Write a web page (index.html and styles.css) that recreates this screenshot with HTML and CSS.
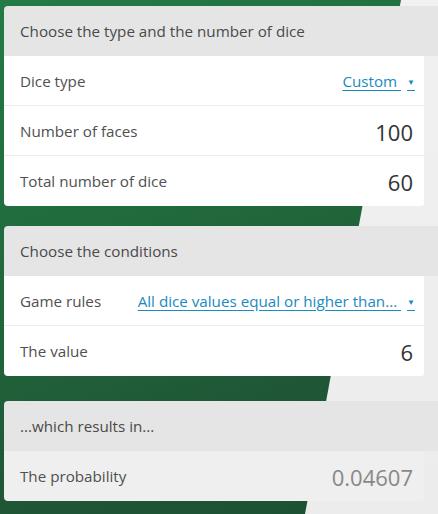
FILE: index.html
```html
<!DOCTYPE html>
<html>
<head>
<meta charset="utf-8">
<link rel="stylesheet" href="styles.css">
</head>
<body>
<div class="bg"></div>
<main class="page">
  <section class="card card-first">
    <div class="card-head">Choose the type and the number of dice</div>
    <div class="rows">
      <div class="row"><span class="label">Dice type</span><a class="select">Custom <span class="caret">▼</span></a></div>
      <div class="row"><span class="label">Number of faces</span><span class="value">100</span></div>
      <div class="row"><span class="label">Total number of dice</span><span class="value">60</span></div>
    </div>
  </section>
  <section class="card card-second">
    <div class="card-head">Choose the conditions</div>
    <div class="rows">
      <div class="row"><span class="label">Game rules</span><a class="select">All dice values equal or higher than... <span class="caret">▼</span></a></div>
      <div class="row"><span class="label">The value</span><span class="value">6</span></div>
    </div>
  </section>
  <section class="card card-third">
    <div class="card-head">...which results in...</div>
    <div class="rows result">
      <div class="row"><span class="label">The probability</span><span class="value muted">0.04607</span></div>
    </div>
  </section>
</main>
</body>
</html>
```

FILE: styles.css
```css
html, body {
  margin: 0;
  padding: 0;
  width: 438px;
  height: 514px;
  overflow: hidden;
}
body {
  position: relative;
  font-family: "Open Sans", "Noto Sans", sans-serif;
  background: linear-gradient(160deg, #237b45 0%, #216a3c 40%, #1f5636 75%, #1d4f33 100%);
}
.bg {
  position: absolute;
  inset: 0;
  background: linear-gradient(180deg, #f1f1f1 0%, #ececec 100%);
  clip-path: polygon(401px 0, 438px 0, 438px 514px, 305px 514px);
}
.page {
  position: relative;
  padding: 6px 0 0 4px;
}
.card {
  width: 450px;
  border-radius: 4px 0 0 4px;
  overflow: hidden;
}
.card-second { margin-top: 20px; }
.card-third { margin-top: 25px; }
.card-head {
  height: 50px;
  display: flex;
  align-items: center;
  padding-left: 16px;
  background: #e5e5e5;
  color: #4a4a4a;
  font-size: 15.2px;
}
.rows {
  width: 420px;
  background: #fff;
  border-bottom-right-radius: 3px;
}
.rows.result { background: #efefef; }
.row {
  height: 49px;
  display: flex;
  align-items: center;
  justify-content: space-between;
  padding: 0 11px 0 16px;
  border-bottom: 1px solid #ececec;
}
.row:last-child { border-bottom: none; height: 50px; }
.label {
  color: #505050;
  font-size: 15.2px;
}
.value {
  color: #333;
  font-size: 22px;
  padding-top: 2px;
}
.value.muted { color: #888; }
.select {
  color: #1a8ac0;
  font-size: 15.2px;
  text-decoration: underline;
  text-underline-offset: 3px;
  margin-right: -2px;
}
.caret {
  font-size: 8px;
  vertical-align: 2px;
  margin-left: 6px;
}
```
